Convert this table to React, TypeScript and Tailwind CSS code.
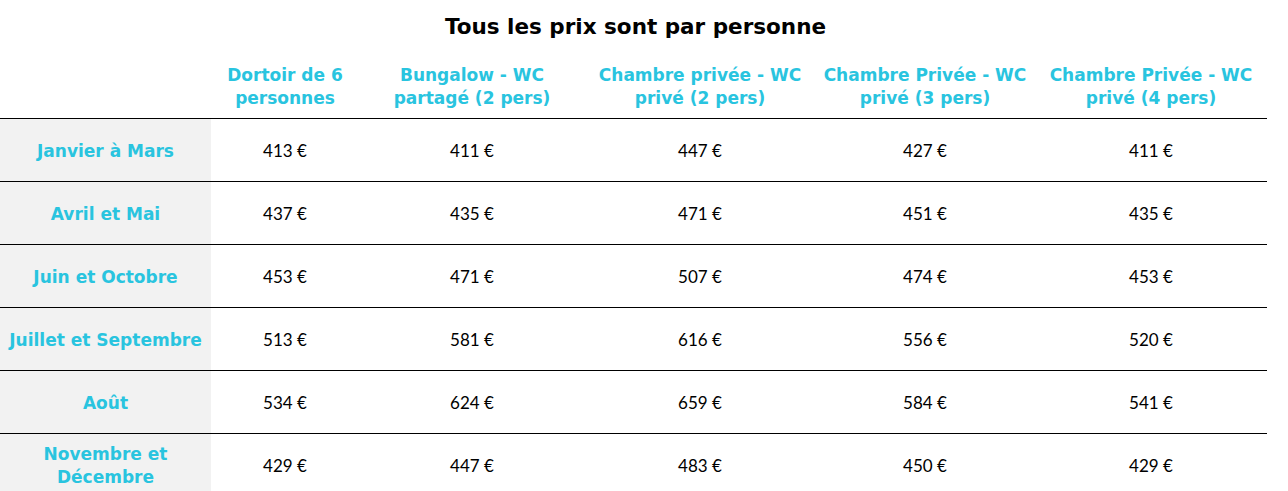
import React from "react";

const headers = [
  ["Dortoir de 6", "personnes"],
  ["Bungalow - WC", "partagé (2 pers)"],
  ["Chambre privée - WC", "privé (2 pers)"],
  ["Chambre Privée - WC", "privé (3 pers)"],
  ["Chambre Privée - WC", "privé (4 pers)"],
];

const rows: { label: string[]; prices: number[] }[] = [
  { label: ["Janvier à Mars"], prices: [413, 411, 447, 427, 411] },
  { label: ["Avril et Mai"], prices: [437, 435, 471, 451, 435] },
  { label: ["Juin et Octobre"], prices: [453, 471, 507, 474, 453] },
  { label: ["Juillet et Septembre"], prices: [513, 581, 616, 556, 520] },
  { label: ["Août"], prices: [534, 624, 659, 584, 541] },
  { label: ["Novembre et", "Décembre"], prices: [429, 447, 483, 450, 429] },
];

const cols = "grid grid-cols-[211px_148px_226px_230px_220px_232px]";

function App() {
  return (
    <div className="w-[1267px] bg-white">
      <div className="h-[50px] flex items-center justify-center pl-[4px] pt-[4px] font-['DejaVu_Sans',sans-serif] font-bold text-[21.5px] text-black">
        Tous les prix sont par personne
      </div>

      <div className={`${cols} h-[68px]`}>
        <div />
        {headers.map((h, i) => (
          <div
            key={i}
            className="flex flex-col items-center justify-center pt-[6px] font-['DejaVu_Sans',sans-serif] font-bold text-[17px] leading-[23px] text-[#29c4df] whitespace-nowrap"
          >
            <span>{h[0]}</span>
            <span>{h[1]}</span>
          </div>
        ))}
      </div>

      {rows.map((r, i) => (
        <div key={i} className={`${cols} h-[63px] border-t border-black`}>
          <div className="bg-[#f2f2f2] flex flex-col items-center justify-center pt-[2px] font-['DejaVu_Sans',sans-serif] font-bold text-[17px] leading-[23px] text-[#29c4df] whitespace-nowrap">
            {r.label.map((l, j) => (
              <span key={j}>{l}</span>
            ))}
          </div>
          {r.prices.map((p, j) => (
            <div
              key={j}
              className="flex items-center justify-center pt-[2px] font-['Lato',sans-serif] text-[17px] text-black"
            >
              {p} €
            </div>
          ))}
        </div>
      ))}
    </div>
  );
}

export default App;
